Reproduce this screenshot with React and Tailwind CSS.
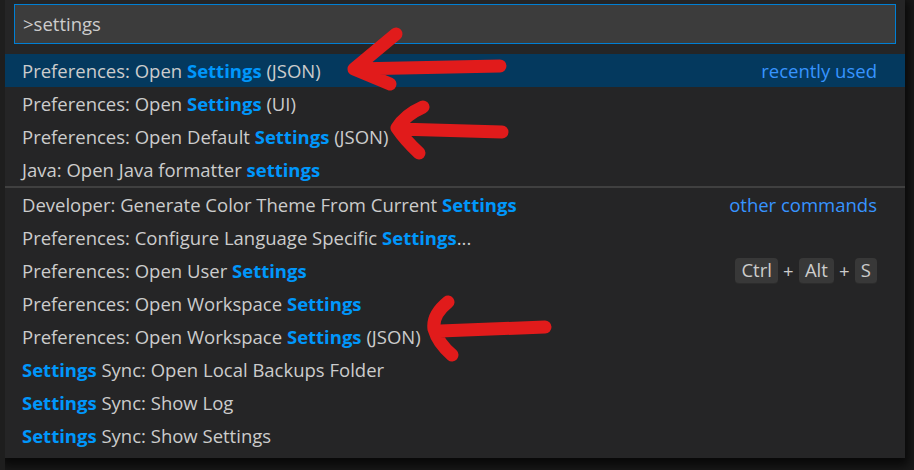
import React from 'react'

const font = { fontFamily: '"Open Sans", "Noto Sans", sans-serif' }

// each row: parts are [text, highlighted]
const groupOne = [
  { parts: [['Preferences: Open ', false], ['Settings', true], [' (JSON)', false]], right: 'recently used', active: true },
  { parts: [['Preferences: Open ', false], ['Settings', true], [' (UI)', false]] },
  { parts: [['Preferences: Open Default ', false], ['Settings', true], [' (JSON)', false]] },
  { parts: [['Java: Open Java formatter ', false], ['settings', true]] },
]

const groupTwo = [
  { parts: [['Developer: Generate Color Theme From Current ', false], ['Settings', true]], right: 'other commands' },
  { parts: [['Preferences: Configure Language Specific ', false], ['Settings', true], ['...', false]] },
  { parts: [['Preferences: Open User ', false], ['Settings', true]], keys: ['Ctrl', 'Alt', 'S'] },
  { parts: [['Preferences: Open Workspace ', false], ['Settings', true]] },
  { parts: [['Preferences: Open Workspace ', false], ['Settings', true], [' (JSON)', false]] },
  { parts: [['Settings', true], [' Sync: Open Local Backups Folder', false]] },
  { parts: [['Settings', true], [' Sync: Show Log', false]] },
  { parts: [['Settings', true], [' Sync: Show Settings', false]] },
]

function Keys({ keys }) {
  return (
    <div className="flex items-center">
      {keys.map((k, i) => (
        <React.Fragment key={k}>
          {i > 0 && <span className="w-[21px] text-center text-[#cccccc]">+</span>}
          <span className="h-[26px] px-[6px] flex items-center rounded-[4px] bg-[#383838] border-b border-[#2c2c2c] text-[#cccccc]">
            {k}
          </span>
        </React.Fragment>
      ))}
    </div>
  )
}

function Row({ row }) {
  return (
    <div
      className={
        'h-[33px] flex items-center justify-between pl-[17px] pr-[28px] whitespace-nowrap ' +
        (row.active ? 'bg-[#04395e]' : '')
      }
    >
      <div>
        {row.parts.map(([t, hl], i) =>
          hl ? (
            <span key={i} className="font-bold text-[#0097fb]">{t}</span>
          ) : (
            <span key={i} className="text-[#cccccc]">{t}</span>
          )
        )}
      </div>
      {row.right && <span className="text-[#3794ff]">{row.right}</span>}
      {row.keys && <Keys keys={row.keys} />}
    </div>
  )
}

function Arrows() {
  const stroke = { stroke: '#e11b1b', strokeWidth: 13, strokeLinecap: 'round', strokeLinejoin: 'round', fill: 'none' }
  return (
    <svg className="absolute left-0 top-0 pointer-events-none" width="914" height="470">
      <path d="M500 66 L354 69 M396 34 L354 69 L390 84" style={stroke} />
      <path d="M502 132 L398 129 M423 107 Q405 115 397 128 Q405 140 419 153" style={stroke} />
      <path d="M545 327 L440 331 M448 302 Q432 315 434 329 Q438 343 452 355" style={stroke} />
    </svg>
  )
}

export default function App() {
  return (
    <div className="relative w-[914px] h-[470px] overflow-hidden bg-[#1a1a1a]" style={font}>
      <div className="w-[5px] h-full absolute left-0 top-0 bg-[#1e1e1e]" />
      <div className="ml-[5px] w-[900px] bg-[#252526] pb-[6px] shadow-[0_4px_10px_4px_rgba(0,0,0,0.7)] text-[18.5px]">
        <div className="px-[9px] pt-[4px]">
          <div className="h-[40px] border border-[#007fd4] bg-[#3c3c3c] flex items-center pl-[8px] text-[#cccccc]">
            &gt;settings
          </div>
        </div>
        <div className="mt-[10px]">
          {groupOne.map((r, i) => (
            <Row key={i} row={r} />
          ))}
          <div className="h-[2px] bg-[#404040]" />
          {groupTwo.map((r, i) => (
            <Row key={i} row={r} />
          ))}
        </div>
      </div>
      <Arrows />
    </div>
  )
}
